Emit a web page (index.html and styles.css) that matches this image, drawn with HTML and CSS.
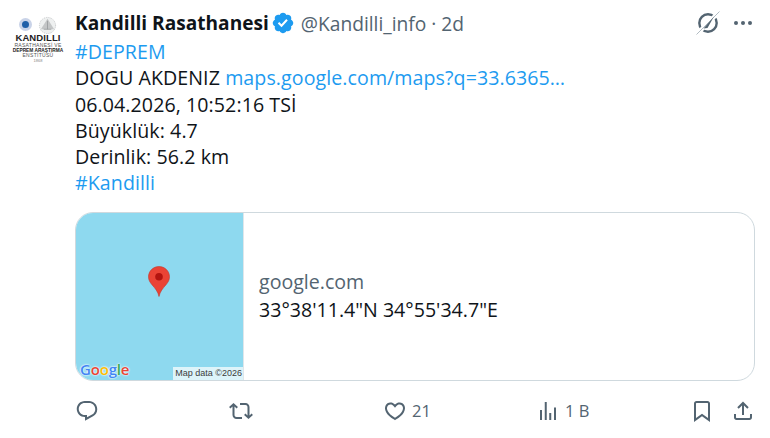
FILE: index.html
```html
<!DOCTYPE html>
<html lang="tr">
<head>
<meta charset="utf-8">
<title>Kandilli Rasathanesi</title>
<link rel="stylesheet" href="styles.css">
</head>
<body>
<article class="tweet">
  <div class="avatar">
    <div class="seals">
      <span class="seal-blue"></span>
      <svg class="seal-grey" viewBox="0 0 20 20"><circle cx="10" cy="10" r="8.500" fill="#eef0f0" stroke="#b5b8ba" stroke-width=".8" stroke-dasharray="1 1"/><path d="M3 14 10 3l7 11z" fill="#c4c6c7"/><path d="M6 14h8M10 5v9" stroke="#8d9092" stroke-width=".7"/></svg>
    </div>
    <div class="av-title">KANDILLI</div>
    <div class="av-line">RASATHANESİ VE</div>
    <div class="av-line av-dark">DEPREM ARAŞTIRMA</div>
    <div class="av-line">ENSTİTÜSÜ</div>
    <div class="av-year">1868</div>
  </div>
  <div class="main">
    <header class="head">
      <strong class="name">Kandilli Rasathanesi</strong>
      <svg class="badge" viewBox="0 0 24 24"><path fill="#1d9bf0" d="M22.25 12c0-1.43-.88-2.67-2.19-3.34.46-1.39.2-2.9-.81-3.91s-2.52-1.27-3.91-.81c-.66-1.31-1.91-2.19-3.34-2.19s-2.67.88-3.33 2.19c-1.4-.46-2.91-.2-3.92.81s-1.26 2.52-.8 3.91c-1.31.67-2.2 1.91-2.2 3.34s.89 2.67 2.2 3.34c-.46 1.39-.21 2.9.8 3.91s2.52 1.26 3.91.81c.67 1.31 1.91 2.19 3.34 2.19s2.68-.88 3.34-2.19c1.39.45 2.9.2 3.91-.81s1.27-2.52.81-3.91c1.31-.67 2.19-1.91 2.19-3.34zm-11.71 4.2L6.8 12.46l1.41-1.42 2.26 2.26 4.8-5.23 1.47 1.36-6.2 6.77z"/></svg>
      <span class="handle">@Kandilli_info · 2d</span>
      <span class="head-tools">
        <svg class="grok" viewBox="0 0 26 26"><circle cx="13" cy="13" r="8.700" fill="none" stroke="#536471" stroke-width="2.400"/><path d="M2 24 24 2" stroke="#fff" stroke-width="4.500"/><path d="M1.500 24.500 24.500 1.500" stroke="#a9b4bc" stroke-width=".9"/><path d="M8.500 18.500 19 6.500 12.500 18z" fill="#536471"/></svg>
        <svg class="more" viewBox="0 0 24 24"><g fill="#536471"><circle cx="5" cy="12" r="2"/><circle cx="12" cy="12" r="2"/><circle cx="19" cy="12" r="2"/></g></svg>
      </span>
    </header>
    <div class="body">
      <div><a class="link">#DEPREM</a></div>
      <div>DOGU AKDENIZ <a class="link">maps.google.com/maps?q=33.6365…</a></div>
      <div>06.04.2026, 10:52:16 TSİ</div>
      <div>Büyüklük: 4.7</div>
      <div>Derinlik: 56.2 km</div>
      <div><a class="link">#Kandilli</a></div>
    </div>
    <section class="card">
      <div class="map">
        <svg class="pin" viewBox="0 0 22 31"><path fill="#ea4335" stroke="#c5382c" stroke-width=".6" d="M11 .5C5.2.5.5 5.1.5 10.8c0 3.4 1.6 5.700 3.700 8.200 2.600 3 5.800 6.400 6.800 11.500 1-5.100 4.200-8.500 6.800-11.500 2.100-2.500 3.700-4.800 3.700-8.200C21.500 5.100 16.800.5 11 .5z"/><circle cx="11" cy="10.700" r="3.800" fill="#b3140f"/></svg>
        <div class="g-logo"><span class="gb">G</span><span class="gr">o</span><span class="gy">o</span><span class="gb">g</span><span class="gg">l</span><span class="gr">e</span></div>
        <div class="map-data">Map data ©2026</div>
      </div>
      <div class="card-text">
        <div class="domain">google.com</div>
        <div class="coords">33°38'11.4"N 34°55'34.7"E</div>
      </div>
    </section>
    <footer class="actions">
      <div class="action reply"><svg class="ic" viewBox="0 0 24 24"><path d="M1.751 10c0-4.420 3.584-8 8.005-8h4.366c4.490 0 8.129 3.640 8.129 8.130 0 2.960-1.607 5.680-4.196 7.110l-8.054 4.460v-3.690h-.067c-4.490.100-8.183-3.510-8.183-8.010zm8.005-6c-3.317 0-6.005 2.690-6.005 6 0 3.370 2.770 6.080 6.138 6.010l.351-.010h1.761v2.300l5.087-2.810c1.951-1.080 3.163-3.130 3.163-5.360 0-3.390-2.744-6.130-6.129-6.130H9.756z"/></svg></div>
      <div class="action retweet"><svg class="ic" viewBox="0 0 24 24"><path d="M4.500 3.880l4.432 4.140-1.364 1.460L5.500 7.550V16c0 1.100.896 2 2 2H13v2H7.500c-2.209 0-4-1.790-4-4V7.550L1.432 9.480.068 8.020 4.500 3.880zM16.500 6H11V4h5.500c2.209 0 4 1.790 4 4v8.450l2.068-1.930 1.364 1.460-4.432 4.140-4.432-4.140 1.364-1.460 2.068 1.930V8c0-1.100-.896-2-2-2z"/></svg></div>
      <div class="action like"><svg class="ic" viewBox="0 0 24 24"><path d="M16.697 5.500c-1.222-.060-2.679.510-3.890 2.160l-.805 1.090-.806-1.090C9.984 6.010 8.526 5.440 7.304 5.500c-1.243.070-2.349.780-2.910 1.910-.552 1.120-.633 2.780.479 4.820 1.074 1.970 3.257 4.270 7.129 6.610 3.870-2.340 6.052-4.640 7.126-6.610 1.111-2.040 1.030-3.700.477-4.820-.561-1.130-1.666-1.840-2.908-1.910zm4.187 7.690c-1.351 2.480-4.001 5.120-8.379 7.670l-.503.300-.504-.300c-4.379-2.550-7.029-5.190-8.382-7.670-1.360-2.500-1.410-4.860-.514-6.670.887-1.790 2.647-2.910 4.601-3.010 1.651-.090 3.368.560 4.798 2.010 1.429-1.450 3.146-2.100 4.796-2.010 1.954.100 3.714 1.220 4.601 3.010.896 1.810.846 4.170-.514 6.670z"/></svg><span>21</span></div>
      <div class="action views"><svg class="ic" viewBox="0 0 24 24"><path d="M8.750 21V3h2v18h-2zM18 21V8.500h2V21h-2zM4 21l.004-10h2L6 21H4zm9.248 0v-7h2v7h-2z"/></svg><span>1 B</span></div>
      <div class="action-end">
        <svg class="ic" viewBox="0 0 24 24"><path d="M4 4.500C4 3.120 5.119 2 6.500 2h11C18.881 2 20 3.120 20 4.500v18.440l-8-5.710-8 5.710V4.500zM6.500 4c-.276 0-.5.220-.5.500v14.560l6-4.290 6 4.290V4.500c0-.280-.224-.500-.500-.500h-11z"/></svg>
        <svg class="ic" viewBox="0 0 24 24"><path d="M12 2.590l5.700 5.700-1.410 1.420L13 6.410V16h-2V6.410l-3.300 3.300-1.410-1.420L12 2.590zM21 15l-.020 3.510c0 1.380-1.120 2.490-2.500 2.490H5.500C4.110 21 3 19.880 3 18.500V15h2v3.500c0 .280.220.500.500.500h12.980c.280 0 .500-.220.500-.500L19 15h2z"/></svg>
      </div>
    </footer>
  </div>
</article>
</body>
</html>
```

FILE: styles.css
```css
* { box-sizing: border-box; }
html, body { margin: 0; padding: 0; background: #fff; }
body { width: 770px; height: 438px; overflow: hidden; font-family: "Open Sans", "Noto Sans", sans-serif; color: #0f1419; }
.tweet { display: flex; padding: 10px 15px 0 13px; }
.avatar { width: 50px; margin-right: 12px; display: flex; flex-direction: column; align-items: center; padding-top: 6px; font-family: "Liberation Sans", sans-serif; flex: none; color: #333; }
.seals { display: flex; gap: 6px; align-items: flex-start; height: 16px; }
.seal-blue { width: 13px; height: 13px; margin-top: 2px; border-radius: 50%; border: 3px solid #c9d3e8; background: #1f5fa8; }
.seal-grey { width: 19px; height: 19px; }
.av-title { font-size: 9.500px; font-weight: 700; line-height: 9px; margin: 1px 0 1px; letter-spacing: .1px; color: #222; white-space: nowrap; }
.av-line { font-size: 5px; line-height: 5px; color: #555; white-space: nowrap; letter-spacing: .3px; }
.av-dark { color: #222; font-weight: 700; font-size: 4.800px; letter-spacing: 0; }
.av-year { font-size: 4px; line-height: 6px; color: #888; }
.main { flex: 1; min-width: 0; }
.head { display: flex; align-items: center; height: 26px; }
.name { font-weight: 700; font-size: 19.100px; }
.badge { width: 24px; height: 24px; margin-left: 2px; }
.handle { color: #536471; margin-left: 6px; font-size: 19.200px; }
.head-tools { margin-left: auto; display: flex; align-items: center; gap: 10px; }
.grok { width: 26px; height: 26px; }
.more { width: 24px; height: 24px; }
.body { font-size: 19.600px; line-height: 26.300px; margin-top: 3px; letter-spacing: .08px; }
.link { color: #1d9bf0; }
.card { display: flex; height: 169px; margin-top: 15px; border: 1px solid #cfd9de; border-radius: 18px; overflow: hidden; }
.map { position: relative; width: 168px; flex: none; background: #8ed9ef; border-right: 1px solid #dfe6ea; display: flex; align-items: flex-start; justify-content: center; padding-top: 53px; }
.pin { width: 22px; height: 31px; margin-left: -1px; }
.g-logo { position: absolute; left: 4px; bottom: 0; font-family: "Open Sans", sans-serif; font-weight: 600; font-size: 15px; line-height: 21px; letter-spacing: -.2px; text-shadow: 0 0 2px #fff, 0 0 2px #fff; }
.gb { color: #4285f4; } .gr { color: #ea4335; } .gy { color: #fbbc05; } .gg { color: #34a853; }
.map-data { position: absolute; right: 0; bottom: 0; height: 13px; padding: 0 1px 0 2px; background: rgba(255,255,255,.7); font-family: "Liberation Sans", sans-serif; font-size: 9px; line-height: 13px; color: #3c3c3c; white-space: nowrap; }
.card-text { flex: 1; display: flex; flex-direction: column; justify-content: center; padding-left: 15px; font-size: 19.600px; line-height: 28.500px; }
.domain { color: #536471; }
.actions { display: flex; align-items: center; margin-top: 17px; height: 26px; color: #536471; font-size: 16.500px; }
.action { display: flex; align-items: center; gap: 5px; }
.reply { width: 154px; }
.retweet { width: 154px; }
.like { width: 153px; }
.views { width: 154px; }
.action-end { margin-left: auto; display: flex; gap: 17px; }
.ic { width: 24px; height: 24px; fill: #536471; flex: none; }
```
